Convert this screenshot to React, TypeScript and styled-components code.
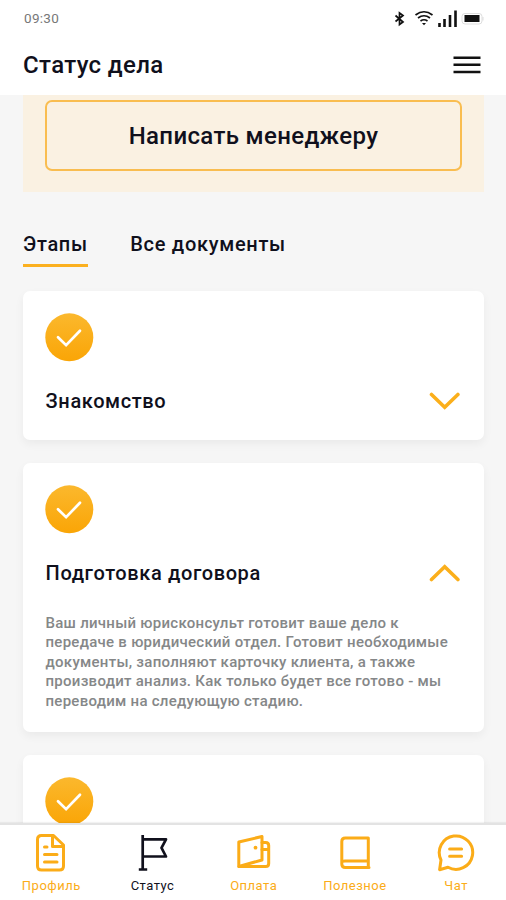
import React from "react";
import styled, { createGlobalStyle } from "styled-components";

const Global = createGlobalStyle`
  * { box-sizing: border-box; }
  body { margin: 0; background: #f6f6f6; font-family: Roboto, "Liberation Sans", sans-serif; }
  button { font: inherit; color: inherit; background: none; border: 0; padding: 0; }
  svg { display: block; }
`;

const Screen = styled.div`
  width: 506px;
  height: 900px;
  display: flex;
  flex-direction: column;
  overflow: hidden;
  color: #10101c;
  background: #f6f6f6;
`;

const StatusBar = styled.div`
  flex: none;
  height: 35px;
  padding: 0 22px 0 24px;
  display: flex;
  align-items: center;
  justify-content: space-between;
  background: #fff;
`;

const Clock = styled.span`
  font-size: 13.5px;
  letter-spacing: 0.3px;
  color: #777;
`;

const Header = styled.header`
  flex: none;
  height: 60px;
  padding: 0 25px 0 23px;
  display: flex;
  align-items: center;
  justify-content: space-between;
  background: #fff;
`;

const Title = styled.h1`
  margin: 0;
  font-size: 24px;
  line-height: 28px;
  font-weight: 500;
  letter-spacing: 0.36px;
`;

const Content = styled.main`
  flex: 1;
  min-height: 0;
  overflow: hidden;
  padding: 0 22px 0 23px;
`;

const ContactPanel = styled.section`
  height: 97px;
  padding: 5px 22px 22px;
  background: #faf1e2;
`;

const ContactButton = styled.button`
  width: 100%;
  height: 71px;
  border: 2px solid #f9bd50;
  border-radius: 7px;
  font-size: 24px;
  font-weight: 500;
  letter-spacing: 0.35px;
`;

const Tabs = styled.nav`
  display: flex;
  gap: 42.5px;
  margin: 40px 0 24px;
`;

const Tab = styled.button<{ $active?: boolean }>`
  height: 35px;
  padding-bottom: 11px;
  border-bottom: 3px solid ${(p) => (p.$active ? "#fbb01f" : "transparent")};
  font-size: 20px;
  line-height: 24px;
  font-weight: 500;
  letter-spacing: 0.7px;
  white-space: nowrap;
`;

const StageList = styled.div`
  display: flex;
  flex-direction: column;
  gap: 23px;
`;

const StageCard = styled.article<{ $height: number }>`
  flex: none;
  height: ${(p) => p.$height}px;
  padding: 22px 23px 0 22px;
  border-radius: 7px;
  background: #fff;
  box-shadow: 0 4px 10px rgba(0, 0, 0, 0.05);
`;

const StageHeading = styled.div`
  display: flex;
  justify-content: space-between;
  align-items: center;
  margin-top: 27px;
  height: 24px;
`;

const StageTitle = styled.h2`
  margin: 0 0 0 0.6px;
  font-size: 20px;
  line-height: 24px;
  font-weight: 500;
  letter-spacing: 0.62px;
`;

const StageText = styled.p`
  margin: 29px 0 0 0.5px;
  font-size: 15px;
  line-height: 19.4px;
  letter-spacing: 0.27px;
  font-weight: 500;
  color: #858788;
  white-space: nowrap;
`;

const BottomNav = styled.nav`
  flex: none;
  height: 77px;
  display: grid;
  grid-template-columns: repeat(5, 1fr);
  border-top: 2px solid #e3e3e3;
  background: #fff;
  box-shadow: 0 -1px 1px rgba(0, 0, 0, 0.05);
`;

const NavItem = styled.button<{ $active?: boolean }>`
  display: flex;
  flex-direction: column;
  align-items: center;
  padding: 7px 0 0 1.5px;
  gap: 4px;
  color: ${(p) => (p.$active ? "#10101c" : "#fbac18")};
  font-size: 13px;
  line-height: 16px;
  letter-spacing: 0.5px;
`;

const NavSvg = styled.svg`
  width: 40px;
  height: 42px;
  fill: none;
  stroke: currentColor;
  stroke-width: 3;
  stroke-linecap: round;
  stroke-linejoin: round;
`;

function SystemIcons() {
  return (
    <svg width="92" height="22" viewBox="392 6 92 22" fill="none" stroke="#111" aria-hidden="true">
      <path d="M395.500 14.500 403 21 399.500 23.500V12L403 14.500 395.500 20.500" strokeWidth="1.700" />
      <path d="M415.500 14q8.500-6.500 17 0M418 17q6-4.500 12 0M420.500 20q3.500-2.500 7 0" strokeWidth="1.700" />
      <path d="M422 22h4l-2 2.200z" fill="#111" stroke="none" />
      <path d="M439.500 22v4M444.500 18v8M450 14v12M455.500 9.500V26" strokeWidth="2.600" />
      <rect x="462" y="12.500" width="20" height="10.500" rx="3" stroke="#ddd" strokeWidth="1" />
      <path d="M483 16v3.500" stroke="#ddd" />
      <rect x="464.500" y="14" width="15" height="7" fill="#111" stroke="none" />
    </svg>
  );
}

function MenuIcon() {
  return (
    <svg width="28" height="20" viewBox="0 0 28 20" stroke="#111" strokeWidth="2.500" aria-hidden="true">
      <path d="M.5 2.800h27M.5 9.800h27M.5 17h27" />
    </svg>
  );
}

function CheckBadge({ id }: { id: string }) {
  return (
    <svg width="49" height="49" viewBox="0 0 49 49" fill="none" aria-hidden="true">
      <defs>
        <linearGradient id={id} x1="0" y1="0" x2="0" y2="1">
          <stop stopColor="#fbb82d" />
          <stop offset="1" stopColor="#faa506" />
        </linearGradient>
      </defs>
      <circle cx="24.300" cy="24.300" r="24" fill={`url(#${id})`} />
      <path d="m13 24.200 8.100 8L35 17.800" stroke="#fff" strokeWidth="2.700" strokeLinecap="round" />
    </svg>
  );
}

function Chevron({ open }: { open?: boolean }) {
  return (
    <svg width="32" height="20" viewBox="0 0 32 20" fill="none" stroke="#fbaf1b" strokeWidth="3.600" strokeLinecap="round" aria-hidden="true">
      <path d={open ? "M2.500 16.500 15.700 3.700 28.900 16.500" : "M2.500 3.500 15.700 16.300 28.900 3.500"} />
    </svg>
  );
}

const icons = {
  profile: (
    <>
      <path d="M22.500 3.500H10.500q-4 0-4 4V34q0 4 4 4h18q4 0 4-4V13z" />
      <path d="M21.500 4v10.500H32M13.500 15h2.500M13.500 22.500h12.500M13.500 30h12.500" />
    </>
  ),
  status: (
    <path d="M9.700 3V37M5.800 37.500h8.400M9.700 7.300h23.300l-4.500 8.500L33 24.500H9.700" strokeLinecap="butt" strokeWidth="2.700" />
  ),
  payment: (
    <>
      <path d="M4.800 10 28 4.500V28L4.800 34.500z" />
      <path d="M28 10.500h3.700q3 0 3 3V31.500q0 3-3 3H5M28 17.500h6.700" />
      <circle cx="21.500" cy="15.700" r="1.900" fill="currentColor" stroke="none" />
    </>
  ),
  useful: (
    <path d="M34 35.500H10.300q-3.500 0-3.500-3.500V9.500q0-3.500 3.500-3.500h23v29.500M7 30q0-1 3-1h23" />
  ),
  chat: (
    <>
      <path d="M3.600 37.700 5 28A16.700 16.700 0 1 1 12 35.300z" />
      <path d="M13.600 17h12M13.600 24.200h12" />
    </>
  ),
};

const navItems: { label: string; icon: keyof typeof icons }[] = [
  { label: "Профиль", icon: "profile" },
  { label: "Статус", icon: "status" },
  { label: "Оплата", icon: "payment" },
  { label: "Полезное", icon: "useful" },
  { label: "Чат", icon: "chat" },
];

export default function App() {
  return (
    <>
      <Global />
      <Screen>
        <StatusBar>
          <Clock>09:30</Clock>
          <SystemIcons />
        </StatusBar>
        <Header>
          <Title>Статус дела</Title>
          <MenuIcon />
        </Header>
        <Content>
          <ContactPanel>
            <ContactButton>Написать менеджеру</ContactButton>
          </ContactPanel>
          <Tabs>
            <Tab $active>Этапы</Tab>
            <Tab>Все документы</Tab>
          </Tabs>
          <StageList>
            <StageCard $height={149}>
              <CheckBadge id="stage-1" />
              <StageHeading>
                <StageTitle>Знакомство</StageTitle>
                <Chevron />
              </StageHeading>
            </StageCard>
            <StageCard $height={269}>
              <CheckBadge id="stage-2" />
              <StageHeading>
                <StageTitle>Подготовка договора</StageTitle>
                <Chevron open />
              </StageHeading>
              <StageText>
                Ваш личный юрисконсульт готовит ваше дело к<br />
                передаче в юридический отдел. Готовит необходимые<br />
                документы, заполняют карточку клиента, а также<br />
                производит анализ. Как только будет все готово - мы<br />
                переводим на следующую стадию.
              </StageText>
            </StageCard>
            <StageCard $height={149}>
              <CheckBadge id="stage-3" />
            </StageCard>
          </StageList>
        </Content>
        <BottomNav>
          {navItems.map(({ label, icon }) => (
            <NavItem key={label} $active={icon === "status"}>
              <NavSvg viewBox="0 0 40 42" aria-hidden="true">{icons[icon]}</NavSvg>
              {label}
            </NavItem>
          ))}
        </BottomNav>
      </Screen>
    </>
  );
}
